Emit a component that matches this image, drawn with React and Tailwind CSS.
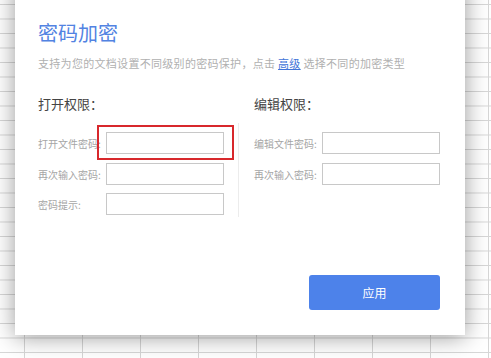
export default function App() {
  const font = "font-['Microsoft_YaHei','Noto_Sans_CJK_SC',sans-serif]";
  return (
    <div className={`relative w-[491px] h-[358px] overflow-hidden bg-white bg-[linear-gradient(to_bottom,#d6d6d6_1px,transparent_1px),linear-gradient(to_right,#d6d6d6_1px,transparent_1px)] bg-size-[58px_14.5px] bg-position-[24px_4px] ${font}`}>
      <div className="absolute left-[15px] top-[-20px] w-[450px] h-[355px] bg-white shadow-[0_2px_22px_rgba(0,0,0,0.4)] pt-[41px] pl-[23px] pr-[25px]">
        <div className="text-[20px] leading-[24px] text-[#5283e2]">密码加密</div>
        <div className="mt-[11px] text-[11px] leading-[14px] text-[#b0b0b0] whitespace-nowrap tracking-[0.3px]">
          支持为您的文档设置不同级别的密码保护，点击 <span className="text-[#3f74d8] underline">高级</span> 选择不同的加密类型
        </div>
        <div className="flex mt-[26px]">
          <div className="w-[202px]">
            <div className="text-[13px] leading-[16px] text-[#444]">打开权限：</div>
            <div className="mt-[11px] border-r border-[#ececec] pt-[9px] pb-[2px] h-[94px]">
              <div className="flex items-center h-[22px]">
                <div className="w-[68px] text-[10px] text-[#a5a5a5] whitespace-nowrap">打开文件密码:</div>
                <div className="relative">
                  <div className="w-[118px] h-[22px] border border-[#c8c8c8] bg-white"></div>
                  <div className="absolute left-[-9px] top-[-7px] w-[137px] h-[35px] border-2 border-[#d8282c]"></div>
                </div>
              </div>
              <div className="flex items-center h-[22px] mt-[9px]">
                <div className="w-[68px] text-[10px] text-[#a5a5a5] whitespace-nowrap">再次输入密码:</div>
                <div className="w-[118px] h-[22px] border border-[#c8c8c8] bg-white"></div>
              </div>
              <div className="flex items-center h-[22px] mt-[8px]">
                <div className="w-[68px] text-[10px] text-[#a5a5a5] whitespace-nowrap">密码提示:</div>
                <div className="w-[118px] h-[22px] border border-[#c8c8c8] bg-white"></div>
              </div>
            </div>
          </div>
          <div className="ml-[15px]">
            <div className="text-[13px] leading-[16px] text-[#444]">编辑权限：</div>
            <div className="mt-[11px] pt-[9px]">
              <div className="flex items-center h-[22px]">
                <div className="w-[68px] text-[10px] text-[#a5a5a5] whitespace-nowrap">编辑文件密码:</div>
                <div className="w-[118px] h-[22px] border border-[#c8c8c8] bg-white"></div>
              </div>
              <div className="flex items-center h-[22px] mt-[9px]">
                <div className="w-[68px] text-[10px] text-[#a5a5a5] whitespace-nowrap">再次输入密码:</div>
                <div className="w-[118px] h-[22px] border border-[#c8c8c8] bg-white"></div>
              </div>
            </div>
          </div>
        </div>
        <div className="flex justify-end mt-[58px]">
          <button className="w-[131px] h-[35px] rounded-[3px] bg-[#4d82ea] text-white text-[12px]">应用</button>
        </div>
      </div>
    </div>
  );
}
